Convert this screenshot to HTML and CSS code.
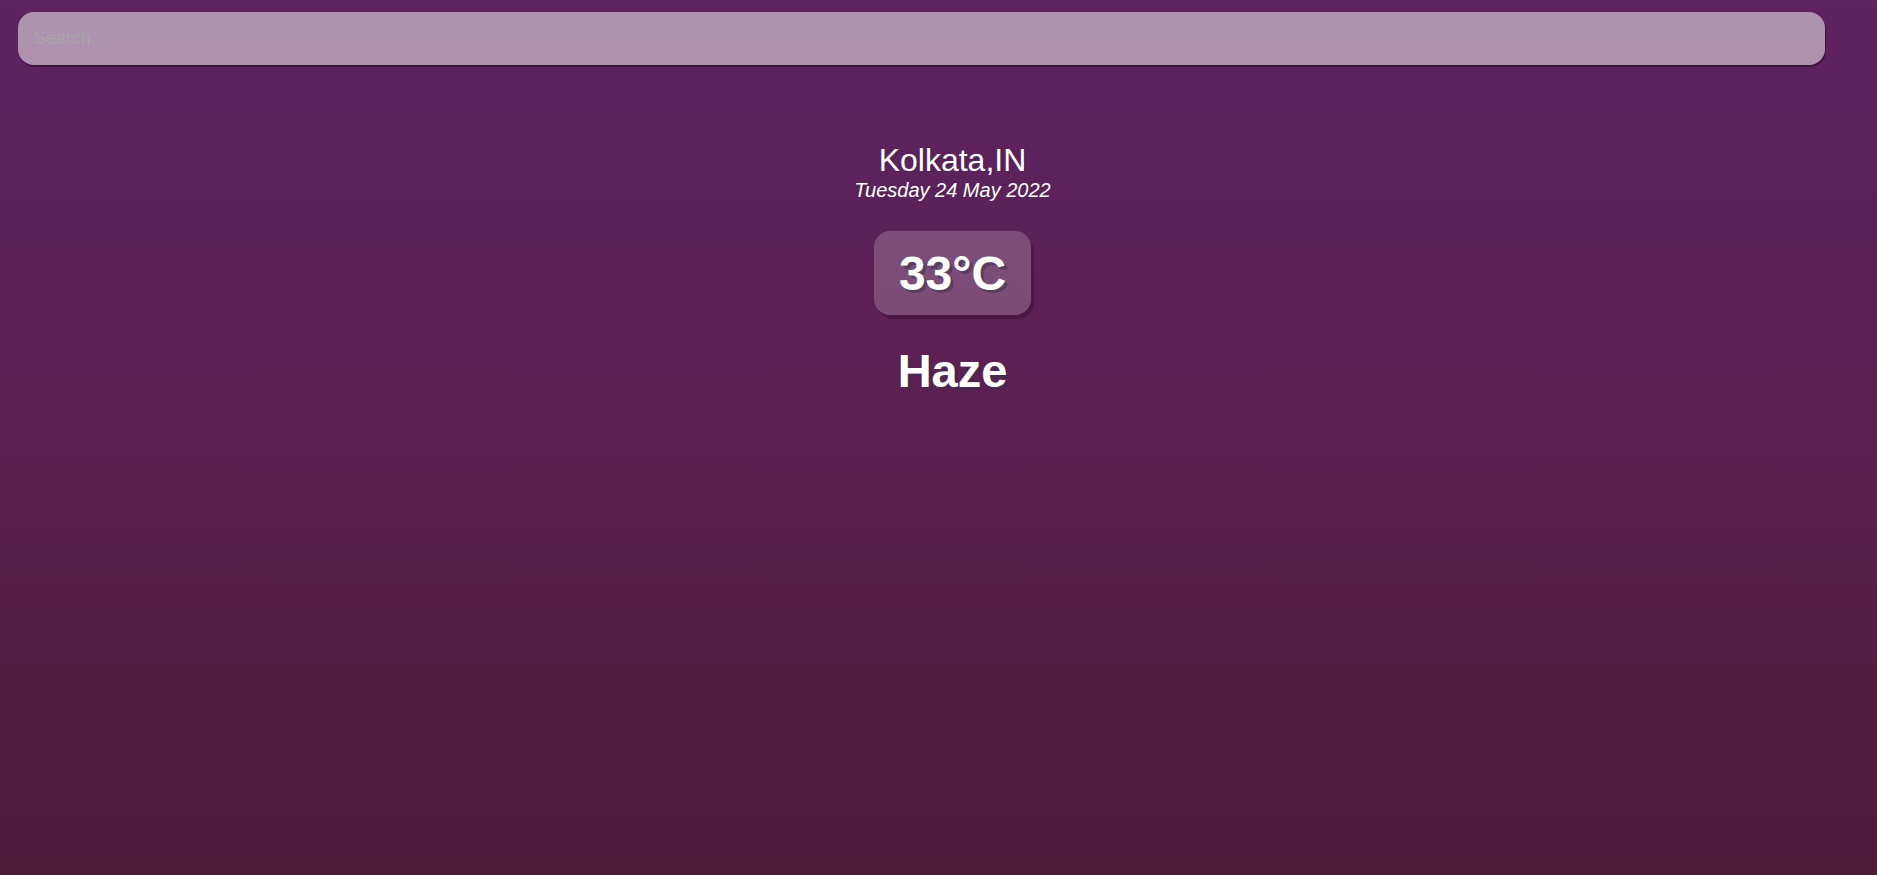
FILE: index.html
```html
<!DOCTYPE html>
<html lang="en">
<head>
<meta charset="utf-8">
<title>Weather</title>
<link rel="stylesheet" href="styles.css">
</head>
<body>
<main class="app">
  <div class="search-box">
    <input type="text" class="search-bar" placeholder="Search....">
  </div>
  <section class="weather-info">
    <div class="location-box">
      <div class="location">Kolkata,IN</div>
      <div class="date">Tuesday 24 May 2022</div>
    </div>
    <div class="weather-box">
      <div class="temp">33°C</div>
      <div class="weather">Haze</div>
    </div>
  </section>
</main>
</body>
</html>
```

FILE: styles.css
```css
* {
  box-sizing: border-box;
}

html, body {
  margin: 0;
  padding: 0;
  height: 100%;
}

body {
  font-family: "Liberation Sans", Arial, Helvetica, sans-serif;
  background: linear-gradient(to bottom, #5e2261 0%, #5c2052 50%, #4f1a38 100%);
  color: #fff;
  overflow: hidden;
}

.app {
  min-height: 100vh;
  padding-top: 12px;
}

.search-box {
  margin: 0 52px 0 18px;
}

.search-bar {
  display: block;
  width: 100%;
  height: 53px;
  padding: 0 16px;
  border: none;
  outline: none;
  border-radius: 16px;
  background: rgba(255, 255, 255, 0.5);
  box-shadow: 1px 2px rgba(0, 0, 0, 0.35);
  font-family: "Liberation Sans", Arial, sans-serif;
  font-size: 18px;
  color: #313131;
}

.search-bar::placeholder {
  color: #a6a6a3;
  opacity: 1;
}

.weather-info {
  display: flex;
  flex-direction: column;
  align-items: center;
  padding-left: 28px;
}

.location-box {
  margin-top: 77px;
  display: flex;
  flex-direction: column;
  align-items: center;
}

.location {
  font-size: 32px;
  line-height: 36px;
  font-weight: 400;
  text-shadow: 2px 2px rgba(50, 50, 70, 0.3);
}

.date {
  font-size: 20px;
  line-height: 24px;
  font-style: italic;
  font-weight: 300;
  text-shadow: 2px 2px rgba(50, 50, 70, 0.3);
}

.weather-box {
  display: flex;
  flex-direction: column;
  align-items: center;
  margin-top: 29px;
}

.temp {
  font-size: 48px;
  line-height: 48px;
  font-weight: 700;
  padding: 19px 25px 17px 25px;
  background: rgba(255, 255, 255, 0.2);
  border-radius: 16px;
  text-shadow: 3px 3px rgba(50, 50, 70, 0.5);
  box-shadow: 3px 4px rgba(0, 0, 0, 0.2);
}

.weather {
  margin-top: 30px;
  font-size: 47px;
  line-height: 52px;
  font-weight: 700;
  text-shadow: 3px 3px rgba(50, 50, 70, 0.5);
}
```
